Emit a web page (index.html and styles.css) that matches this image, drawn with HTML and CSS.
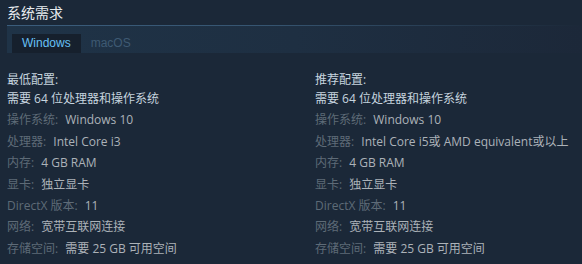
FILE: index.html
```html
<!DOCTYPE html>
<html lang="zh-CN">
<head>
<meta charset="utf-8">
<link rel="stylesheet" href="styles.css">
</head>
<body>
<div class="sysreq">
  <h2 class="title">系统需求</h2>
  <div class="tabs">
    <span class="tab active">Windows</span>
    <span class="tab">macOS</span>
  </div>
  <div class="cols">
    <div class="col">
      <div class="head">最低配置:</div>
      <ul class="list">
        <li class="plain">需要 64 位处理器和操作系统</li>
        <li><span class="label">操作系统:</span> Windows 10</li>
        <li><span class="label">处理器:</span> Intel Core i3</li>
        <li><span class="label">内存:</span> 4 GB RAM</li>
        <li><span class="label">显卡:</span> 独立显卡</li>
        <li><span class="label">DirectX 版本:</span> 11</li>
        <li><span class="label">网络:</span> 宽带互联网连接</li>
        <li><span class="label">存储空间:</span> 需要 25 GB 可用空间</li>
      </ul>
    </div>
    <div class="col col-right">
      <div class="head">推荐配置:</div>
      <ul class="list">
        <li class="plain">需要 64 位处理器和操作系统</li>
        <li><span class="label">操作系统:</span> Windows 10</li>
        <li><span class="label">处理器:</span> Intel Core i5或 AMD equivalent或以上</li>
        <li><span class="label">内存:</span> 4 GB RAM</li>
        <li><span class="label">显卡:</span> 独立显卡</li>
        <li><span class="label">DirectX 版本:</span> 11</li>
        <li><span class="label">网络:</span> 宽带互联网连接</li>
        <li><span class="label">存储空间:</span> 需要 25 GB 可用空间</li>
      </ul>
    </div>
  </div>
</div>
</body>
</html>
```
FILE: styles.css
```css
html, body {
  margin: 0;
  padding: 0;
  background: #1b2838;
}
body {
  font-family: "Open Sans", "Liberation Sans", Arial, "Noto Sans CJK SC", sans-serif;
  font-size: 12px;
  color: #acb2b8;
}
.sysreq {
  padding: 0 0 0 7px;
}
.title {
  margin: 0;
  padding-top: 6px;
  height: 19px;
  line-height: 15px;
  font-size: 14px;
  font-weight: normal;
  font-family: "Liberation Sans", Arial, "Noto Sans CJK SC", sans-serif;
  color: #e8ecef;
  border-bottom: 1px solid transparent;
  border-image: linear-gradient(to right, #3b5d7c 0%, #365571 45%, #1b2838 100%) 1;
}
.tabs {
  display: flex;
  height: 27px;
  padding: 8px 0 0 5px;
  box-sizing: border-box;
  background: linear-gradient(to right, #1f3347 0%, #1e2f42 50%, #1c2839 100%);
}
.tab {
  padding: 0 10px;
  height: 19px;
  line-height: 19px;
  color: #3e5a73;
  font-family: "Liberation Sans", Arial, sans-serif;
}
.tab.active {
  background: #16202d;
  color: #67c1f5;
}
.cols {
  display: flex;
  padding-top: 19px;
}
.col {
  width: 308px;
  flex: none;
}
.col-right {
  flex: 1;
  width: auto;
  min-width: 0;
}
.head {
  line-height: 16px;
  color: #c6d4df;
  margin-bottom: 0;
}
.list {
  list-style: none;
  margin: 0;
  padding: 0;
}
.list li {
  line-height: 21.4px;
  white-space: nowrap;
}
.list li.plain {
  color: #c6d4df;
}
.label {
  color: #5e6b77;
  margin-right: 4px;
}
```
